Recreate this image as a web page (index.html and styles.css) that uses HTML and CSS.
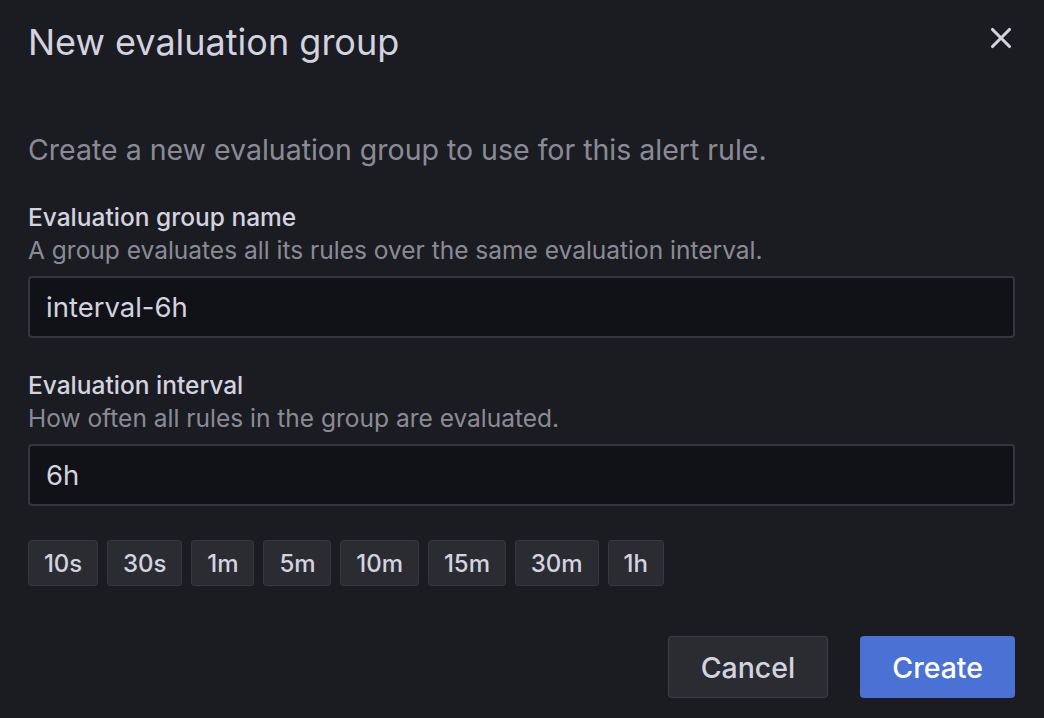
FILE: index.html
```html
<!DOCTYPE html>
<html lang="en">
<head>
    <meta charset="UTF-8">
    <title>New evaluation group</title>
    <link rel="stylesheet" href="styles.css">
</head>
<body>
    <div class="modal">
        <div class="modal-header">
            <h2 class="modal-title">New evaluation group</h2>
            <button class="close-btn" aria-label="Close">
                <svg width="30" height="30" viewBox="0 0 24 24"><path d="M5.2 5.2l13.6 13.6M18.8 5.2l-13.6 13.6" stroke="currentColor" stroke-width="2.5" stroke-linecap="round"/></svg>
            </button>
        </div>

        <p class="intro">Create a new evaluation group to use for this alert rule.</p>

        <div class="field">
            <label class="field-label">Evaluation group name</label>
            <div class="field-desc">A group evaluates all its rules over the same evaluation interval.</div>
            <input class="input" type="text" value="interval-6h">
        </div>

        <div class="field">
            <label class="field-label">Evaluation interval</label>
            <div class="field-desc">How often all rules in the group are evaluated.</div>
            <input class="input" type="text" value="6h">
        </div>

        <div class="chips">
            <button class="chip">10s</button>
            <button class="chip">30s</button>
            <button class="chip">1m</button>
            <button class="chip">5m</button>
            <button class="chip">10m</button>
            <button class="chip">15m</button>
            <button class="chip">30m</button>
            <button class="chip">1h</button>
        </div>

        <div class="actions">
            <button class="btn btn-secondary">Cancel</button>
            <button class="btn btn-primary">Create</button>
        </div>
    </div>
</body>
</html>
```

FILE: styles.css
```css
html, body {
    margin: 0;
    padding: 0;
    background-color: #1b1c21;
    font-family: Inter, "Noto Sans", sans-serif;
    color: #ccccdc;
}

.modal {
    padding: 0 29px 0 28px;
    height: 718px;
    box-sizing: border-box;
}

.modal-header {
    display: flex;
    justify-content: space-between;
    align-items: center;
    height: 84px;
}

.modal-title {
    margin: 0;
    font-size: 36px;
    font-weight: 400;
    color: #d3d3e0;
}

.close-btn {
    background: none;
    border: none;
    padding: 0;
    margin: 0 -1px 8px 0;
    color: #d3d3e0;
    display: flex;
    cursor: pointer;
}

.intro {
    margin: 46px 0 0;
    font-size: 28.5px;
    line-height: 40px;
    color: rgba(204, 204, 220, 0.65);
}

.field {
    margin-top: 31px;
    display: flex;
    flex-direction: column;
}

.field-label {
    font-size: 24.5px;
    font-weight: 500;
    line-height: 32px;
    color: #d3d3e0;
}

.field-desc {
    font-size: 24.5px;
    line-height: 34px;
    color: rgba(204, 204, 220, 0.65);
}

.input {
    margin-top: 9px;
    height: 62px;
    box-sizing: border-box;
    background-color: #111217;
    border: 2px solid rgba(204, 204, 220, 0.2);
    border-radius: 4px;
    padding: 0 16px;
    font-family: inherit;
    font-size: 27.5px;
    color: #d3d3e0;
    outline: none;
}

.chips {
    display: flex;
    gap: 9px;
    margin-top: 34px;
}

.chip {
    height: 46px;
    padding: 0 14.9px;
    background-color: #2b2c32;
    border: 1px solid rgba(204, 204, 220, 0.08);
    border-radius: 4px;
    font-family: inherit;
    font-size: 24px;
    font-weight: 500;
    color: #d3d3e0;
}

.actions {
    display: flex;
    justify-content: flex-end;
    gap: 32px;
    margin-top: 50px;
}

.btn {
    height: 62px;
    padding: 0 32px;
    border-radius: 4px;
    font-family: inherit;
    font-size: 28.5px;
    font-weight: 500;
    cursor: pointer;
}

.btn-secondary {
    background-color: #2b2c32;
    border: 1px solid rgba(204, 204, 220, 0.12);
    color: #d3d3e0;
}

.btn-primary {
    background-color: #4a72d5;
    border: none;
    color: #ffffff;
}
```
